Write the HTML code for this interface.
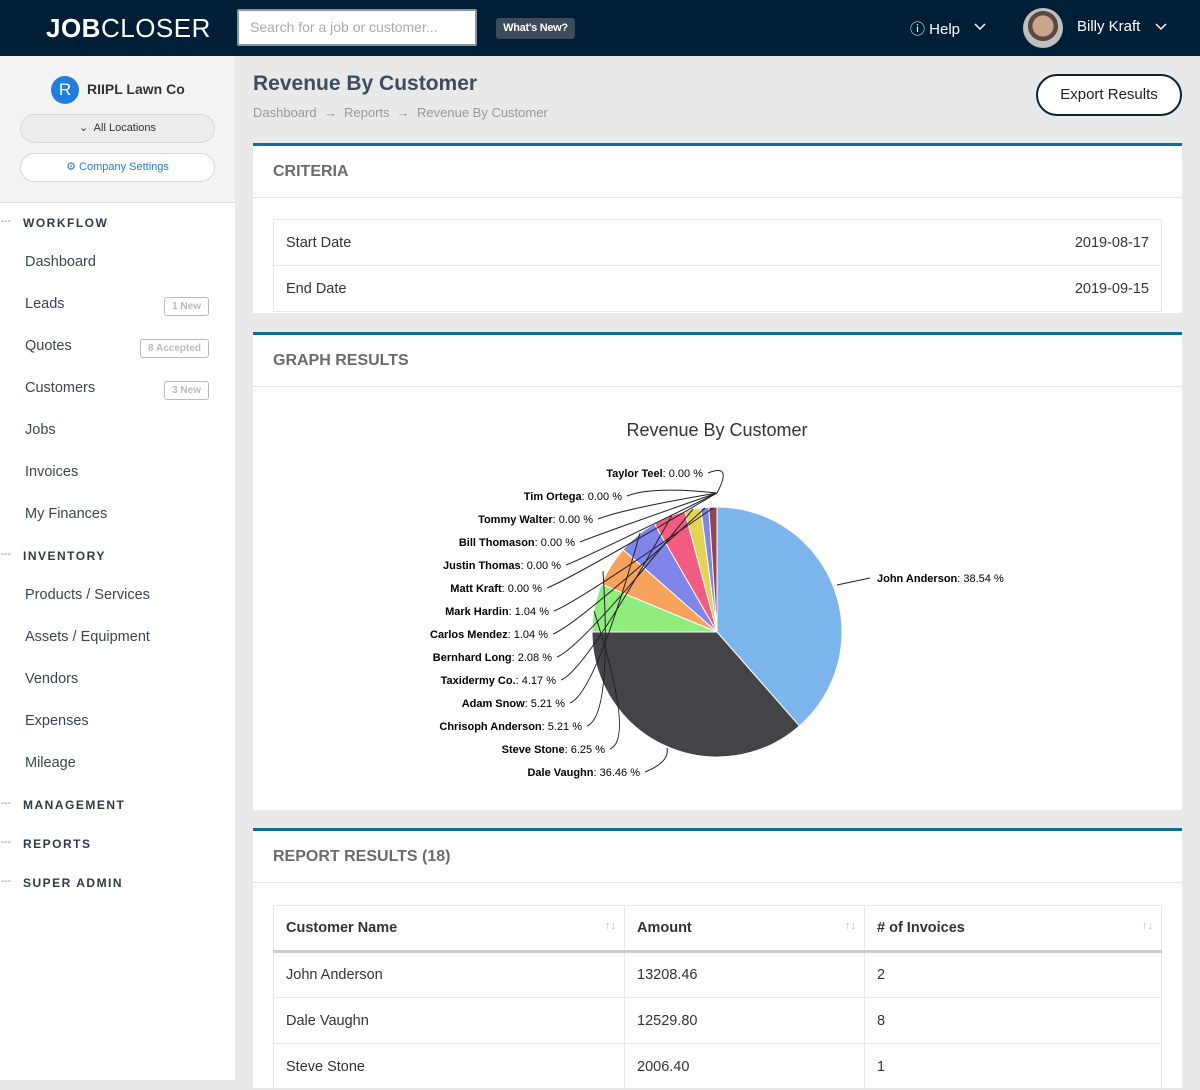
<!DOCTYPE html>
<html><head><meta charset="utf-8">
<style>
*{box-sizing:border-box;margin:0;padding:0}
body{width:1200px;height:1080px;overflow:hidden;font-family:"Liberation Sans",sans-serif;background:#e9e9e9;position:relative;color:#333}
.hdr{position:absolute;left:0;top:0;width:1200px;height:56px;background:#001f36;color:#fff}
.logo{position:absolute;left:46px;top:13px;font-size:26px;letter-spacing:0.5px;color:#fff}
.search{position:absolute;left:237px;top:9px;width:240px;height:37px;background:#fff;border:2px solid #8a96a3;border-radius:2px;color:#aaa;font-size:14px;padding:8px 11px}
.wn{position:absolute;left:496px;top:18px;width:79px;height:21px;background:#3d4a5a;border-radius:3px;font-size:11px;font-weight:bold;color:#fff;text-align:center;line-height:21px;letter-spacing:-0.3px}
.side{position:absolute;left:0;top:56px;width:235px;height:1024px;background:#fff}
.sidetop{position:absolute;left:0;top:0;width:235px;height:147px;background:#f4f4f4;border-bottom:1px solid #ddd}
.pill{position:absolute;left:20px;width:195px;height:29px;border:1px solid #d8d8d8;border-radius:15px;font-size:11px;text-align:center;line-height:27px}
.sec{position:absolute;left:23px;font-size:12px;font-weight:bold;letter-spacing:1.5px;color:#2f3a4d}
.sec:before{content:"---";position:absolute;left:-22px;color:#888;font-weight:normal;letter-spacing:0;font-size:10px;top:0px}
.item{position:absolute;left:25px;font-size:14.5px;color:#3a4556}
.badge{position:absolute;right:26px;height:19px;border:1px solid #bbb;border-radius:3px;font-size:10px;color:#bbb;padding:0 7px;line-height:17px;font-weight:bold}
.panel{position:absolute;left:253px;width:929px;background:#fff;border-top:3px solid #106f93}
.ph{height:52px;border-bottom:1px solid #e2e2e2;font-size:16px;font-weight:bold;color:#6b6b6b;padding:17px 0 0 20px}
table{border-collapse:collapse;position:absolute;left:20px;width:889px;font-size:14.5px;color:#333}
td,th{border:1px solid #e8e8e8;height:46px;padding:0 12px;text-align:left}
.crit td{border-left:none;border-right:none}
.crit td:first-child{border-left:1px solid #e8e8e8}
.crit td:last-child{border-right:1px solid #e8e8e8}
th{font-weight:bold;border-bottom:3px solid #ccc;position:relative}
th span{position:absolute;right:8px;color:#bbb;font-size:11px;font-weight:normal}
</style></head><body>
<div class="hdr">
<div class="logo"><b>JOB</b>CLOSER</div>
<div class="search">Search for a job or customer...</div>
<div class="wn">What's New?</div>
<div style="position:absolute;left:910px;top:18px;font-size:15px">&#9432; Help</div>
<div style="position:absolute;left:1023px;top:8px;width:40px;height:40px;border-radius:50%;background:radial-gradient(circle at 50% 45%,#c9a58c 0 35%,#5a4a3e 36% 50%,#bfbfbf 51%)"></div>
<div style="position:absolute;left:1077px;top:18px;font-size:15px">Billy Kraft</div>
<svg style="position:absolute;left:1155px;top:23px" width="12" height="8"><path d="M1 1l5 5 5-5" stroke="#fff" fill="none" stroke-width="1.5"/></svg>
<svg style="position:absolute;left:974px;top:23px" width="12" height="8"><path d="M1 1l5 5 5-5" stroke="#fff" fill="none" stroke-width="1.5"/></svg>
</div>
<div class="side">
<div class="sidetop">
<div style="position:absolute;left:51px;top:20px;width:28px;height:28px;border-radius:50%;background:#1f7ee0;color:#fff;text-align:center;line-height:28px;font-size:17px">R</div>
<div style="position:absolute;left:87px;top:25px;font-size:14px;font-weight:bold;color:#333">RIIPL Lawn Co</div>
<div class="pill" style="top:58px;background:#ececec;color:#333">&#8964;&nbsp; All Locations</div>
<div class="pill" style="top:97px;background:#fff;color:#1f7ee0">&#9881; Company Settings</div>
</div>
<div class="sec" style="top:160px">WORKFLOW</div>
<div class="item" style="top:198px">Dashboard</div>
<div class="item" style="top:240px">Leads</div><div class="badge" style="top:241px">1 New</div>
<div class="item" style="top:282px">Quotes</div><div class="badge" style="top:283px">8 Accepted</div>
<div class="item" style="top:324px">Customers</div><div class="badge" style="top:325px">3 New</div>
<div class="item" style="top:366px">Jobs</div>
<div class="item" style="top:408px">Invoices</div>
<div class="item" style="top:450px">My Finances</div>
<div class="sec" style="top:493px">INVENTORY</div>
<div class="item" style="top:531px">Products / Services</div>
<div class="item" style="top:573px">Assets / Equipment</div>
<div class="item" style="top:615px">Vendors</div>
<div class="item" style="top:657px">Expenses</div>
<div class="item" style="top:699px">Mileage</div>
<div class="sec" style="top:742px">MANAGEMENT</div>
<div class="sec" style="top:781px">REPORTS</div>
<div class="sec" style="top:820px">SUPER ADMIN</div>
</div>
<div style="position:absolute;left:253px;top:72px;font-size:21px;color:#3d4d60;font-weight:bold">Revenue By Customer</div>
<div style="position:absolute;left:253px;top:105px;font-size:13px;color:#999">Dashboard &nbsp;&#8594;&nbsp; Reports &nbsp;&#8594;&nbsp; Revenue By Customer</div>
<div style="position:absolute;left:1036px;top:74px;width:146px;height:42px;border:2px solid #0d2234;border-radius:21px;background:#fff;font-size:15px;text-align:center;line-height:38px;color:#222">Export Results</div>

<div class="panel" style="top:143px;height:170px">
<div class="ph">CRITERIA</div>
<table class="crit" style="top:73px"><tr><td>Start Date</td><td style="text-align:right">2019-08-17</td></tr><tr><td>End Date</td><td style="text-align:right">2019-09-15</td></tr></table>
</div>
<div class="panel" style="top:332px;height:478px">
<div class="ph">GRAPH RESULTS</div>
<svg id="pie" width="929" height="420" style="position:absolute;left:0;top:55px;font-family:'Liberation Sans',sans-serif"></svg>
</div>
<div class="panel" style="top:828px;height:260px">
<div class="ph">REPORT RESULTS (18)</div>
<table style="top:74px">
<tr><th style="width:351px">Customer Name<span>&#8593;&#8595;</span></th><th style="width:240px">Amount<span>&#8593;&#8595;</span></th><th># of Invoices<span>&#8593;&#8595;</span></th></tr>
<tr><td>John Anderson</td><td>13208.46</td><td>2</td></tr>
<tr><td>Dale Vaughn</td><td>12529.80</td><td>8</td></tr>
<tr><td>Steve Stone</td><td>2006.40</td><td>1</td></tr>
</table>
</div>
<script>
var s=document.getElementById('pie'),ox=253,oy=387;
var cx=717-ox,cy=629-oy,r=125;
var d=[[38.54,'#7cb5ec'],[36.46,'#434348'],[6.25,'#90ed7d'],[5.21,'#f7a35c'],[5.21,'#8085e9'],[4.17,'#f15c80'],[2.08,'#e4d354'],[1.04,'#8085e8'],[1.04,'#8d4653'],[0.01,'#91e8e1']];
var h='<text x="'+(717-ox)+'" y="'+(433-oy)+'" text-anchor="middle" font-size="18" fill="#333">Revenue By Customer</text>';
var c=0;
function pt(p,rr){var a=(-90+3.6*p)*Math.PI/180;return [cx+rr*Math.cos(a),cy+rr*Math.sin(a)];}
d.forEach(function(e){var a=pt(c,r),b=pt(c+e[0],r);var lg=e[0]>50?1:0;
h+='<path d="M'+cx+' '+cy+'L'+a[0]+' '+a[1]+'A'+r+' '+r+' 0 '+lg+' 1 '+b[0]+' '+b[1]+'Z" fill="'+e[1]+'" stroke="#fff" stroke-width="1"/>';
c+=e[0];});
var L=[['Taylor Teel','0.00',703,474],['Tim Ortega','0.00',622,497],['Tommy Walter','0.00',593,520],['Bill Thomason','0.00',575,543],['Justin Thomas','0.00',561,566],['Matt Kraft','0.00',542,589],['Mark Hardin','1.04',549,612],['Carlos Mendez','1.04',548,635],['Bernhard Long','2.08',552,658],['Taxidermy Co.','4.17',556,681],['Adam Snow','5.21',565,704],['Chrisoph Anderson','5.21',582,727],['Steve Stone','6.25',605,750],['Dale Vaughn','36.46',640,773]];
var tgt=[[717,490],[717,490],[717,490],[717,490],[717,490],[717,490],[713,505],[705,505],[693,506],[672,512],[640,530],[603,568],[594,608],[667,745]];
L.forEach(function(l,i){var x=l[2]-ox,y=l[3]-oy;var t=tgt[i];
h+='<path d="M'+(x+5)+' '+(y-4)+'Q'+(x+30)+' '+(y-14)+' '+(t[0]-ox)+' '+(t[1]-oy)+'" stroke="#222" fill="none" stroke-width="1"/>';
h+='<text x="'+x+'" y="'+y+'" text-anchor="end" font-size="11" fill="#000"><tspan font-weight="bold">'+l[0]+'</tspan>: '+l[1]+' %</text>';});
h+='<path d="M'+(837-ox)+' '+(582-oy)+'L'+(870-ox)+' '+(575-oy)+'" stroke="#222" fill="none"/>';
h+='<text x="'+(877-ox)+'" y="'+(579-oy)+'" font-size="11" fill="#000"><tspan font-weight="bold">John Anderson</tspan>: 38.54 %</text>';
s.innerHTML=h;
</script>
</body></html>
